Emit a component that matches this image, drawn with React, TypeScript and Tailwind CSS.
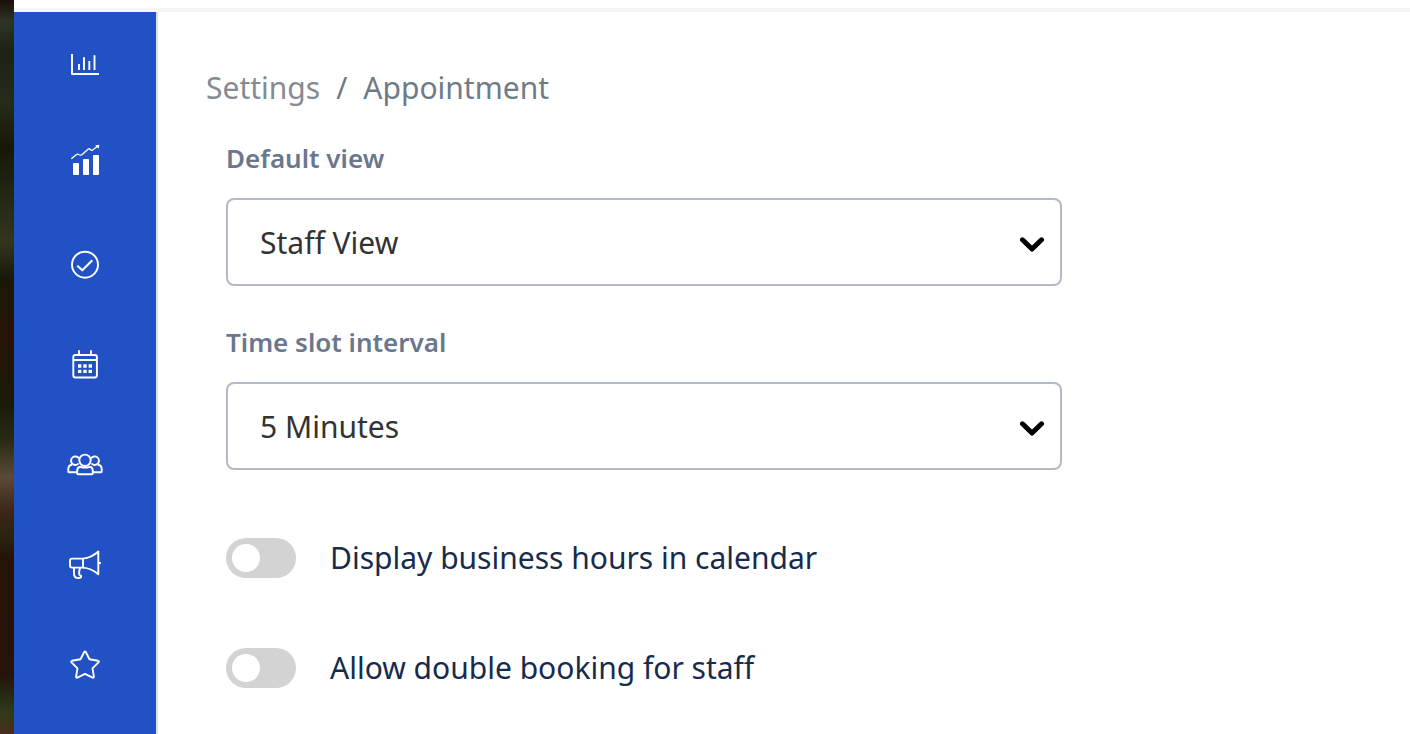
import React from "react";

const navItems = [
  {
    label: "Dashboard",
    icon: (
      <>
        <path d="M5 7v20h27" />
        <path d="M12 17v6M17 10.3V23M22.3 14v9M27.5 8.3V23" />
      </>
    ),
  },
  {
    label: "Reports",
    icon: (
      <>
        <g fill="currentColor" stroke="none">
          <rect x="6" y="16" width="6" height="12" rx="0.8" />
          <rect x="16" y="12" width="6" height="16" rx="0.8" />
          <rect x="26" y="8" width="6" height="20" rx="0.8" />
          <path d="M32.3-2.3l-.6 4-3.6-3.2z" />
        </g>
        <path
          strokeWidth="1.3"
          d="M4.3 11.7l5-4q1.4-1 2.8 0 1.4.8 2.8 0l6.4-5.6q1-.8 2 .4 1.2 1.4 2.4.4l5-3.8"
        />
      </>
    ),
  },
  {
    label: "Tasks",
    icon: (
      <>
        <circle cx="18" cy="17.7" r="13" />
        <path strokeWidth="2.2" d="M10.3 18.7l5 4.6 10-10" />
      </>
    ),
  },
  {
    label: "Calendar",
    icon: (
      <>
        <rect x="6.3" y="8" width="23.6" height="22.5" rx="2" />
        <path d="M6.3 13h23.6M12 3.300v4.500M24 3.300v4.500" />
        <path
          fill="currentColor"
          stroke="none"
          d="M11 17.3h3.4v3.4H11zM16.3 17.3h3.4v3.4h-3.4zM21.6 17.3H25v3.4h-3.4zM11 22.7h3.4v3.4H11zM16.3 22.7h3.4v3.4h-3.4zM21.6 22.7H25v3.4h-3.4z"
        />
      </>
    ),
  },
  {
    label: "Staff",
    icon: (
      <>
        <circle cx="18" cy="13.3" r="5.7" />
        <path d="M13.2 19.800q-3 .6-3 4v2.400q0 1.100 1.100 1.100h13.400q1.100 0 1.100-1.100v-2.400q0-3.400-3-4-4.800 1.600-9.600 0z" />
        <path d="M11.900 11.300a4.300 4.300 0 1 0-.3 5.200M24.100 11.300a4.300 4.300 0 1 1 .3 5.200" />
        <path d="M5.200 17.700Q1.300 18.200 1.300 22v2.400q0 .9.900.9h8M30.800 17.700q3.900.5 3.900 4.300v2.400q0 .9-.9.900h-8" />
      </>
    ),
  },
  {
    label: "Marketing",
    icon: (
      <>
        <path d="M16 11.600H5q-2 0-2 2v5q0 2 2 2h11z" />
        <path d="M16 11.600q8.500-.8 15.300-7.100v22.800Q24 21.100 16 20.600" />
        <path d="M7 20.800v6q0 4.300 4.500 4.300 3 0 2.700-2.200-2.400-.6-2.100-3.600l.9-4.500" />
        <circle cx="32.800" cy="16" r="1.300" fill="currentColor" stroke="none" />
      </>
    ),
  },
  {
    label: "Reviews",
    icon: (
      <path d="M17.200 5q.8-1.200 1.600 0l3.700 7.300 8.500 1.500q1.400.4.500 1.500l-6 6 1.400 8.300q.1 1.500-1.300 1L18 26.900l-7.600 3.700q-1.400.5-1.300-1l1.400-8.300-6-6q-.9-1.100.5-1.500l8.500-1.500z" />
    ),
  },
];

const SelectField = ({
  id,
  label,
  options,
}: {
  id: string;
  label: string;
  options: string[];
}) => (
  <div className="flex flex-col gap-5">
    <label htmlFor={id} className="text-[26px] leading-10 font-semibold text-[#6b778c]">
      {label}
    </label>
    <div className="relative">
      <select
        id={id}
        className="h-22 w-full appearance-none rounded-lg border-2 border-[#b3b9c6] bg-white px-8 text-[30px] text-[#333333]"
      >
        {options.map((option) => (
          <option key={option}>{option}</option>
        ))}
      </select>
      <svg
        viewBox="0 0 26 20"
        className="pointer-events-none absolute inset-y-0 right-4 my-auto h-5 w-[26px]"
        fill="none"
        stroke="#000"
        strokeWidth="5"
        strokeLinecap="round"
        strokeLinejoin="round"
      >
        <path d="M2.500 7.800l9.500 9.200 9.500-9.200" />
      </svg>
    </div>
  </div>
);

const Toggle = ({ id, label }: { id: string; label: string }) => (
  <div className="flex items-center gap-[34px]">
    <input
      id={id}
      type="checkbox"
      role="switch"
      className="flex h-10 w-[70px] shrink-0 appearance-none items-center rounded-full bg-[#d3d3d3] px-1.5 before:size-7 before:rounded-full before:bg-white checked:justify-end checked:bg-[#2251c5]"
    />
    <label htmlFor={id} className="text-[30px] leading-10 text-[#172b4d]">
      {label}
    </label>
  </div>
);

const App = () => {
  return (
    <div className="flex min-h-screen bg-white font-['Segoe_UI','Noto_Sans',sans-serif]">
      {/* sliver of the forest wallpaper */}
      <div className="w-3.5 shrink-0 bg-[linear-gradient(#1a100a,#2c3524_3%,#1c2214_7%,#262c1a_14%,#171708_20%,#262a16_28%,#34351d_33%,#1a1808_38%,#261305_46%,#1b1a08_55%,#2a2a14_60%,#5a4a35_65%,#3a2416_70%,#2a2410_73%,#241306_76%,#24140a_92%,#2e3a1a_97%,#4a2c1c)]" />
      <div className="flex min-w-0 flex-1 flex-col">
        <header className="h-3 border-b-4 border-[#f5f5f5] bg-white" />
        <div className="flex flex-1">
          <nav className="w-36 shrink-0 border-r-2 border-[#dfe1e6] bg-[#2251c5] pt-[3px]">
            {navItems.map((item) => (
              <button
                key={item.label}
                type="button"
                aria-label={item.label}
                className="flex h-25 w-full items-center justify-center text-white"
              >
                <svg
                  viewBox="-4 -4 44 44"
                  className="size-11"
                  fill="none"
                  stroke="currentColor"
                  strokeWidth="1.9"
                  strokeLinejoin="round"
                >
                  {item.icon}
                </svg>
              </button>
            ))}
          </nav>
          <main className="min-w-0 flex-1 px-12 pt-14">
            <div className="flex gap-4 text-[30px] leading-10 text-[#6f7b87]">
              <a href="#settings" className="text-[#848b92]">
                Settings
              </a>
              <span>/</span>
              <span>Appointment</span>
            </div>
            <form className="max-w-[856px] pt-[30px] pl-5">
              <div className="flex flex-col gap-9">
                <SelectField
                  id="default-view"
                  label="Default view"
                  options={["Staff View", "Calendar View"]}
                />
                <SelectField
                  id="slot-interval"
                  label="Time slot interval"
                  options={["5 Minutes", "10 Minutes", "15 Minutes"]}
                />
              </div>
              <div className="flex flex-col gap-[70px] pt-[68px]">
                <Toggle id="business-hours" label="Display business hours in calendar" />
                <Toggle id="double-booking" label="Allow double booking for staff" />
              </div>
            </form>
          </main>
        </div>
      </div>
    </div>
  );
};

export default App;
